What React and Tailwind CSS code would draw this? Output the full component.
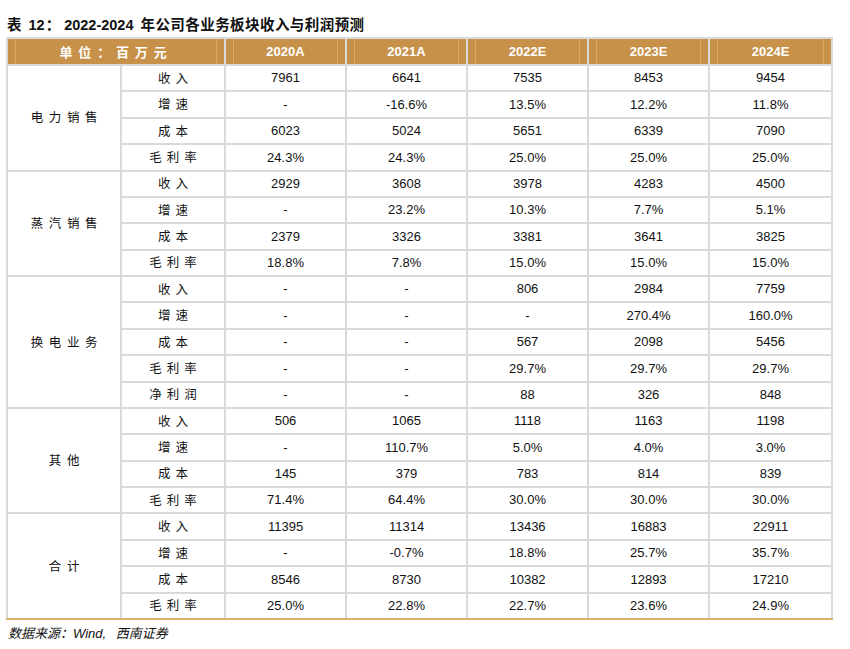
import React from "react";

const groups = [
  {
    name: "电力销售",
    rows: [
      ["收入", "7961", "6641", "7535", "8453", "9454"],
      ["增速", "-", "-16.6%", "13.5%", "12.2%", "11.8%"],
      ["成本", "6023", "5024", "5651", "6339", "7090"],
      ["毛利率", "24.3%", "24.3%", "25.0%", "25.0%", "25.0%"],
    ],
  },
  {
    name: "蒸汽销售",
    rows: [
      ["收入", "2929", "3608", "3978", "4283", "4500"],
      ["增速", "-", "23.2%", "10.3%", "7.7%", "5.1%"],
      ["成本", "2379", "3326", "3381", "3641", "3825"],
      ["毛利率", "18.8%", "7.8%", "15.0%", "15.0%", "15.0%"],
    ],
  },
  {
    name: "换电业务",
    rows: [
      ["收入", "-", "-", "806", "2984", "7759"],
      ["增速", "-", "-", "-", "270.4%", "160.0%"],
      ["成本", "-", "-", "567", "2098", "5456"],
      ["毛利率", "-", "-", "29.7%", "29.7%", "29.7%"],
      ["净利润", "-", "-", "88", "326", "848"],
    ],
  },
  {
    name: "其他",
    rows: [
      ["收入", "506", "1065", "1118", "1163", "1198"],
      ["增速", "-", "110.7%", "5.0%", "4.0%", "3.0%"],
      ["成本", "145", "379", "783", "814", "839"],
      ["毛利率", "71.4%", "64.4%", "30.0%", "30.0%", "30.0%"],
    ],
  },
  {
    name: "合计",
    rows: [
      ["收入", "11395", "11314", "13436", "16883", "22911"],
      ["增速", "-", "-0.7%", "18.8%", "25.7%", "35.7%"],
      ["成本", "8546", "8730", "10382", "12893", "17210"],
      ["毛利率", "25.0%", "22.8%", "22.7%", "23.6%", "24.9%"],
    ],
  },
];

const years = ["2020A", "2021A", "2022E", "2023E", "2024E"];

function HeadCell({ children, colSpan, cjk }) {
  return (
    <th colSpan={colSpan} className="p-0 border-2 border-[#dadada] bg-[#c8914a]">
      <div className="mx-[7px] h-[25px] border-x border-[#d9a767] flex items-center justify-center">
        <span
          className={
            cjk
              ? "text-white font-bold text-[13px] tracking-[0.45em] [font-family:'Noto_Sans_CJK_SC',sans-serif]"
              : "text-white font-bold text-[13px] [font-family:'Liberation_Sans',sans-serif]"
          }
        >
          {children}
        </span>
      </div>
    </th>
  );
}

export default function App() {
  return (
    <div className="w-[850px] h-[649px] bg-white relative">
      <div className="pl-[7px] pt-[15px] h-[37px] flex items-start">
        <span className="text-[14.5px] font-bold text-[#111] [font-family:'Liberation_Sans','Noto_Sans_CJK_SC',sans-serif] whitespace-pre">
          <span>表</span>
          <span className="ml-[7px]">12</span>
          <span className="ml-[1px] mr-[4px]">：</span>
          <span>2022-2024</span>
          <span className="ml-[7px] tracking-[0.03em]">年公司各业务板块收入与利润预测</span>
        </span>
      </div>
      <table className="ml-[6px] border-collapse table-fixed w-[825px] text-[#111]">
        <colgroup>
          <col className="w-[114px]" />
          <col className="w-[104px]" />
          <col className="w-[121px]" />
          <col className="w-[121px]" />
          <col className="w-[121px]" />
          <col className="w-[121px]" />
          <col className="w-[123px]" />
        </colgroup>
        <thead>
          <tr className="h-[27px]">
            <HeadCell colSpan={2} cjk>
              单位：百万元
            </HeadCell>
            {years.map((y) => (
              <HeadCell key={y}>{y}</HeadCell>
            ))}
          </tr>
        </thead>
        <tbody>
          {groups.map((g, gi) =>
            g.rows.map((r, ri) => {
              const lastGroup = gi === groups.length - 1;
              const lastRow = lastGroup && ri === g.rows.length - 1;
              const bb = lastRow ? " border-b-[#ddb072]" : "";
              return (
                <tr key={gi + "-" + ri} className="h-[26.38px]">
                  {ri === 0 && (
                    <td
                      rowSpan={g.rows.length}
                      className={
                        "p-0 border-2 border-[#dadada] text-center text-[12.5px] tracking-[0.45em] pl-[6px] [font-family:'Noto_Sans_CJK_SC',sans-serif]" +
                        (lastGroup ? " border-b-[#ddb072]" : "")
                      }
                    >
                      {g.name}
                    </td>
                  )}
                  <td
                    className={
                      "p-0 border-2 border-[#dadada] text-center text-[12.5px] tracking-[0.4em] pl-[5px] [font-family:'Noto_Sans_CJK_SC',sans-serif]" +
                      bb
                    }
                  >
                    {r[0]}
                  </td>
                  {r.slice(1).map((v, vi) => (
                    <td
                      key={vi}
                      className={
                        "p-0 border-2 border-[#dadada] text-center text-[13px] [font-family:'Liberation_Sans',sans-serif]" +
                        bb
                      }
                    >
                      {v}
                    </td>
                  ))}
                </tr>
              );
            })
          )}
        </tbody>
      </table>
      <div className="pl-[8px] pt-[4px] text-[13px] italic text-[#111] [font-family:'Liberation_Sans','Noto_Sans_CJK_SC',sans-serif]">
        数据来源：Wind, <span className="ml-[6px]">西南证券</span>
      </div>
    </div>
  );
}
